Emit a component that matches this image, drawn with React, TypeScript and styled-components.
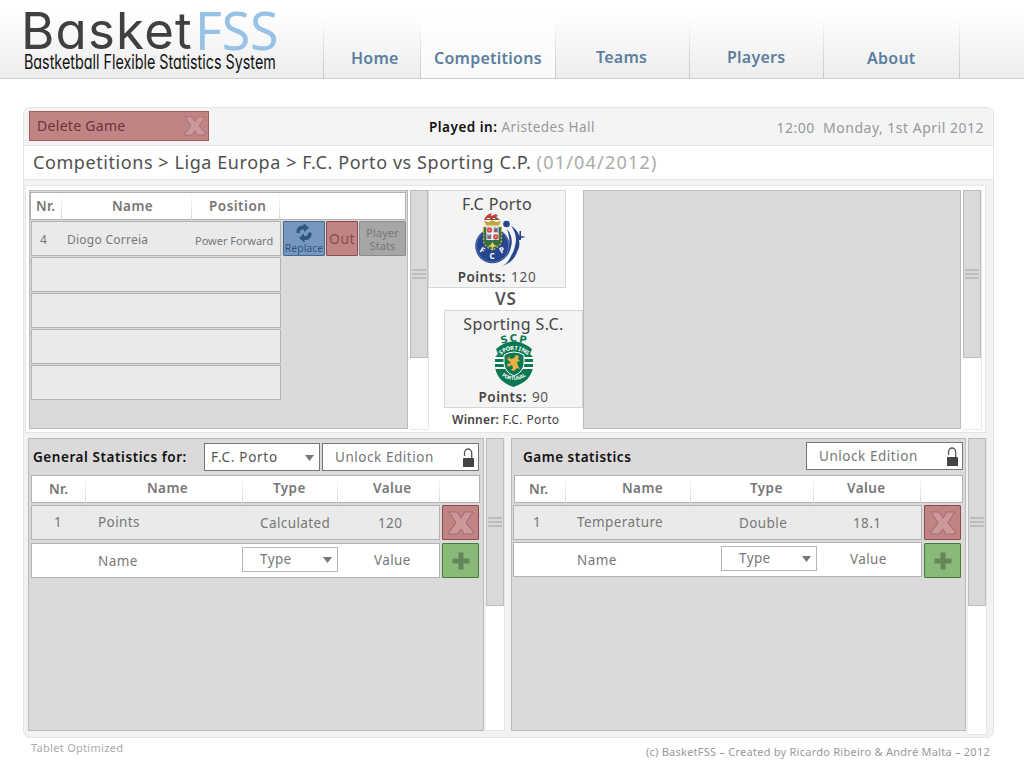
import React from "react";
import styled, { createGlobalStyle, css } from "styled-components";

const Global = createGlobalStyle`
  * { box-sizing: border-box; }
  body { margin: 0; background: #fff; }
  body, button { font-family: "Noto Sans", "Open Sans", sans-serif; }
  button { padding: 0; margin: 0; cursor: pointer; }
`;

const Page = styled.div`
  width: 1024px;
  height: 768px;
  overflow: hidden;
  display: flex;
  flex-direction: column;
`;

const Text = styled.span<{ $size?: number; $gap?: number; $color?: string; $bold?: boolean }>`
  display: inline-block;
  vertical-align: top;
  font-size: ${(p) => p.$size ?? 13.5}px;
  letter-spacing: ${(p) => p.$gap ?? 0.4}px;
  color: ${(p) => p.$color ?? "#777"};
  font-weight: ${(p) => (p.$bold ? 600 : 400)};
  line-height: 1;
  white-space: pre;
`;

/* ---------- header ---------- */

const Header = styled.header`
  height: 79px;
  flex: none;
  display: flex;
  border-bottom: 1px solid #cdcdcd;
  background: linear-gradient(#fff 12px, #ededed 78px);
`;

const Brand = styled.div`
  width: 323px;
  padding: 2px 0 0 21px;
`;

const Wordmark = styled.div`
  height: 50px;
  display: flex;
  color: #404040;
  font: 400 51px/58px Inter, sans-serif;
  font-feature-settings: "cv11";
  letter-spacing: 1.2px;
`;

const Accent = styled.span`
  margin-left: 2px;
  color: #98c1e6;
  font: 400 52px/56px "Noto Sans", sans-serif;
  letter-spacing: -0.2px;
`;

const Tagline = styled.div`
  width: 400px;
  padding-left: 4px;
  color: #111;
  font: 400 19.5px/20px Inter, sans-serif;
  font-feature-settings: "cv11";
  transform: scaleX(0.735);
  transform-origin: 0 0;
`;

const Nav = styled.nav`
  display: flex;
`;

const Tab = styled.a<{ $width: number; $active?: boolean; $left: number; $top: number }>`
  width: ${(p) => p.$width}px;
  height: 78px;
  padding: ${(p) => p.$top}px 0 0 ${(p) => p.$left}px;
  border-left: 1px solid;
  border-image: linear-gradient(transparent 25%, #c3c8cd) 1;
  ${(p) => p.$active && css`background: linear-gradient(#fff 12px, #f9f9f9 78px);`}
`;

/* ---------- main panel ---------- */

const Panel = styled.main`
  width: 971px;
  height: 631px;
  flex: none;
  margin: 28px 0 0 23px;
  border: 1px solid #e4e4e4;
  border-radius: 7px;
  background: #f2f2f2;
  overflow: hidden;
`;

const TopBar = styled.div`
  height: 38px;
  display: flex;
  border-bottom: 1px solid #e4e4e4;
  padding: 3px 0 0 5px;
  background: #f4f4f4;
`;

const DeleteButton = styled.button`
  width: 180px;
  height: 30px;
  display: flex;
  align-items: center;
  justify-content: space-between;
  padding: 0 2px 0 7px;
  border: 1px solid #a95b5c;
  background: #c08484;
`;

const Venue = styled.div`
  width: 346px;
  padding: 10px 0 0 220px;
  white-space: nowrap;
`;

const Kickoff = styled.div`
  flex: 1;
  padding: 10px 9px 0 0;
  text-align: right;
`;

const Crumbs = styled.div`
  height: 34px;
  padding: 7px 0 0 9px;
  border-bottom: 1px solid #e4e4e4;
  background: #fff;
  display: flex;
`;

const GameBox = styled.section`
  width: 961px;
  height: 248px;
  margin: 5px 0 0 1px;
  padding: 4px 3px;
  display: flex;
  border: 1px solid #e6e6e6;
  background: #fff;
`;

const Pane = styled.div<{ $width: number; $height: number; $pad?: string; $left?: number }>`
  width: ${(p) => p.$width}px;
  height: ${(p) => p.$height}px;
  flex: none;
  margin-left: ${(p) => p.$left ?? 0}px;
  padding: ${(p) => p.$pad ?? "0"};
  border: 1px solid #bababa;
  background: #dbd9da;
`;

const Track = styled.div<{ $height: number; $left: number }>`
  width: 19px;
  height: ${(p) => p.$height}px;
  flex: none;
  margin-left: ${(p) => p.$left}px;
  border: 1px solid #e6e6e6;
  border-width: 0 1px 1px 0;
  background: #fff;
`;

const Thumb = styled.div`
  width: 18px;
  height: 168px;
  padding-top: 78px;
  display: flex;
  flex-direction: column;
  align-items: center;
  gap: 2px;
  border: 1px solid #bcbcbc;
  background: #d9d9d9;
  i { width: 14px; height: 2px; background: #bcbcbc; }
`;

const Scroll = ({ height, left }: { height: number; left: number }) => (
  <Track $height={height} $left={left}>
    <Thumb><i /><i /><i /></Thumb>
  </Track>
);

/* ---------- tables ---------- */

const Heading = styled.div<{ $cols: string; $width: number; $left?: number }>`
  width: ${(p) => p.$width}px;
  height: 28px;
  margin-left: ${(p) => p.$left ?? 0}px;
  display: grid;
  grid-template-columns: ${(p) => p.$cols};
  border: 1px solid #b2b2b2;
  background: #fff;
`;

const HeadCell = styled.div<{ $left?: number; $top?: number; $last?: boolean }>`
  padding: ${(p) => p.$top ?? 6}px 0 0 ${(p) => p.$left ?? 0}px;
  border-right: ${(p) => (p.$last ? 0 : 1)}px solid;
  border-image: linear-gradient(#fff, #ccd5de) 1;
`;

const Row = styled.div<{ $cols?: string; $width: number; $blank?: boolean; $raise?: number }>`
  width: ${(p) => p.$width}px;
  height: 35px;
  flex: none;
  margin-top: -${(p) => p.$raise ?? 0}px;
  display: grid;
  grid-template-columns: ${(p) => p.$cols ?? "1fr"};
  border: 1px solid #b2b2b2;
  background: ${(p) => (p.$blank ? "#fff" : "#eaeaea")};
`;

const Rows = styled.div<{ $left: number }>`
  padding-left: ${(p) => p.$left}px;
`;

const Cell = styled.div<{ $left?: number; $top?: number }>`
  padding: ${(p) => p.$top ?? 10}px 0 0 ${(p) => p.$left ?? 0}px;
`;

const Line = styled.div<{ $gap: number; $top?: number }>`
  display: flex;
  gap: ${(p) => p.$gap}px;
  margin-top: ${(p) => p.$top ?? 0}px;
`;

const tones = {
  blue: ["#7798be", "#47678f"],
  red: ["#c08484", "#8d4a4c"],
  grey: ["#a6a6a6", "#8c8c8c"],
  green: ["#8aba78", "#3f8037"],
};

const Action = styled.button<{ $tone: keyof typeof tones; $width: number; $spread?: number }>`
  width: ${(p) => p.$width}px;
  height: 35px;
  display: flex;
  flex-direction: column;
  align-items: center;
  justify-content: center;
  gap: ${(p) => p.$spread ?? 0}px;
  border: 1px solid ${(p) => tones[p.$tone][1]};
  border-radius: 1px;
  background: ${(p) => tones[p.$tone][0]};
`;

const Select = styled.div<{ $width: number; $height: number; $left: number; $strong?: boolean }>`
  width: ${(p) => p.$width}px;
  height: ${(p) => p.$height}px;
  display: flex;
  align-items: center;
  justify-content: space-between;
  padding: 1px 4px 0 ${(p) => p.$left}px;
  border: 1px solid ${(p) => (p.$strong ? "#777" : "#b5b5b5")};
  background: #fff;
`;

const Unlock = styled.button`
  width: 157px;
  height: 28px;
  display: flex;
  align-items: center;
  justify-content: space-between;
  padding: 1px 3px 0 12px;
  border: 1px solid #777;
  background: #fff;
`;

const ToolRow = styled.div<{ $top: number; $right: number }>`
  height: 36px;
  display: flex;
  padding: ${(p) => p.$top}px ${(p) => p.$right}px 0 4px;
`;

const ToolTitle = styled.div<{ $left?: number; $top: number }>`
  flex: 1;
  padding: ${(p) => p.$top}px 0 0 ${(p) => p.$left ?? 0}px;
`;

const Stats = styled.section`
  display: flex;
  margin: 5px 0 0 4px;
`;

/* ---------- match ---------- */

const Match = styled.div`
  width: 154px;
  flex: none;
  display: flex;
  flex-direction: column;
`;

const Team = styled.div<{ $left: number; $width: number }>`
  width: ${(p) => p.$width}px;
  height: 98px;
  flex: none;
  margin-left: ${(p) => p.$left}px;
  padding-top: 5px;
  display: flex;
  flex-direction: column;
  align-items: center;
  border: 1px solid #d6d6d6;
  background: #f4f4f4;
`;

const Versus = styled.div`
  height: 22px;
  padding: 2px 0 0 66px;
`;

const Winner = styled.div`
  padding: 6px 0 0 23px;
  white-space: nowrap;
`;

const Footer = styled.footer`
  display: flex;
  justify-content: space-between;
  padding: 4px 34px 0 31px;
`;

const Created = styled.div`
  padding-top: 4px;
`;

/* ---------- drawings ---------- */

const Cross = ({ w, h }: { w: number; h: number }) => (
  <svg width={w} height={h} viewBox="0 0 26 24">
    <path d="M1 1h8l4 6 4-6h8l-2 3-5 8 7 8v3h-9l-3-5-4 5H1v-2l7-9-5-8z" fill="#cb999a" stroke="#aa6c6e" strokeWidth="1.1" strokeLinejoin="round" />
  </svg>
);

const Plus = () => (
  <svg width="18" height="18" viewBox="0 0 18 18">
    <path d="M6.5.5h5v6h6v5h-6v6h-5v-6h-6v-5h6z" fill="#64865a" />
  </svg>
);

const Arrow = () => (
  <svg width="11" height="8" viewBox="0 0 11 8"><path d="M1 1h9L5.500 7z" fill="#777" /></svg>
);

const Lock = () => (
  <svg width="13" height="20" viewBox="0 0 13 20">
    <path d="M2.500 8V5a3.600 4 0 0 1 7.200 0v5" fill="none" stroke="#555" strokeWidth="1.300" />
    <rect x="1" y="10" width="11" height="9" rx=".5" fill="#444" />
  </svg>
);

const Cycle = () => (
  <svg width="18" height="20" viewBox="0 0 18 20">
    <g fill="#31557f">
      <path d="M1.500 10C1 5 4 2 8.500 2.500V0L14 4.700 9 9V6.500C6 6 4.500 7.500 4.700 10z" />
      <path d="M16.500 9.500c.5 5-2.500 8-7 7.500V19.500L4 15l5-4.500V13c3 .500 4.500-1 4.300-3.500z" />
    </g>
  </svg>
);

const CrestBox = styled.div<{ $left?: number }>`
  height: 55px;
  padding-left: ${(p) => p.$left ?? 0}px;
  svg { display: block; }
`;

const PortoCrest = () => (
  <svg width="52" height="55" viewBox="0 0 52 55">
    <g fill="#25458f">
      <circle cx="32.500" cy="12" r="3.300" />
      <path d="M37 14c5 6 6 14 4 20-1 5-3 8-4 10-2 5-5 8-9 10 7-2 13-7 15-14 2-4 3-7 2-12h2v-2l5-1-5-1v-5h-1.500v5C44 20 41 16 37 14z" />
      <path d="M33 17c4 5 6 11 4 18-1 5-3 8-5 10 1-4 2-6 3-10 1-7 0-12-2-18z" />
      <circle cx="18.500" cy="34" r="17.300" />
    </g>
    <circle cx="18.500" cy="34" r="16.300" fill="none" stroke="#5673ad" />
    <path d="M9.500 15h18v14c0 4-5 7-9 9-4.500-2-9-5-9-9z" fill="#367044" stroke="#cfb641" strokeWidth="1.200" strokeDasharray="2 1.500" />
    <path d="M12.500 15h12v13h-12z" fill="#fff" />
    <path d="M12.500 15h5.800v6.200h-5.800zM19 21.800h5.500V28H19z" fill="#e5c9d0" />
    <g fill="none" stroke="#d54b45" strokeWidth="1.800"><circle cx="15.500" cy="18" r="1.700" /><circle cx="21.800" cy="24.800" r="1.700" /></g>
    <path d="M19.500 15.500h4.500v5h-4.500zM13 22.300h4.500v5H13z" fill="#7b93c2" />
    <path d="M20.500 17h2.500v3h-2.500zM14 24h2.500v3H14z" fill="#a85061" />
    <path d="M12 13.500 10 9l5 1 3-2 4 2 5-1-2 4.500z" fill="#c1a53e" />
    <path d="M10 8c2-5 5-6 8-7l-1 3 5-2 2 2-2 1 4 3H10z" fill="#d5393e" />
    <path d="m15 4 3 2-4 2zm6 1 4 2-5 1z" fill="#287c4b" />
    <path d="M13 6.500h3M19 6.500h2" stroke="#fff" />
    <path d="m18.500 30 2 3 3 1-4 1-1 4-1-4-4-1 3-1z" fill="#d8ce78" />
    <g fill="#fff" fontFamily="Noto Sans" fontWeight="700" fontSize="8" textAnchor="middle">
      <text x="8.500" y="41" transform="rotate(30 8.500 38)">F</text>
      <text x="18" y="47">C</text>
      <text x="28" y="41" transform="rotate(-30 28 38)">P</text>
    </g>
  </svg>
);

const arc = (word: string, cx: number, cy: number, r: number, spread: number, size: number, below = false) =>
  word.split("").map((ch, i) => {
    const a = (i - (word.length - 1) / 2) * spread * (below ? -1 : 1);
    return (
      <text key={i} x={cx} y={below ? cy + r : cy - r} fontSize={size} transform={`rotate(${a} ${cx} ${cy})`}>{ch}</text>
    );
  });

const SportingCrest = () => (
  <svg width="40" height="56" viewBox="0 0 40 56">
    <defs><clipPath id="shield"><path d="M2 17q18-15 36 0l-2 5 3 3v9q-1 15-19.500 21Q2 49 1 34v-9l3-3z" /></clipPath></defs>
    <g clipPath="url(#shield)">
      <path d="M0 8h40v48H0z" fill="#0b7851" />
      <path d="M0 26h40M0 31h40M0 36h40" stroke="#fff" strokeWidth="2" />
    </g>
    <path d="M10 23q10-6 20 0v9q-1 8-10 12-9-4-10-12z" fill="#0b7851" stroke="#fff" strokeWidth="1" />
    <path d="M22 23l3 1-1 3 2 2-3 1 1 4 2 3-3-1-3 3-3-1 2-2-1-3-4 2-1-3 4-1-3-3-2-2 3 1-1-3 3 3 3-1z" fill="#e9af40" />
    <g fontFamily="Noto Sans" fontWeight="700" textAnchor="middle" fill="#fff">
      {arc("SPORTING", 20, 38, 20, 10.500, 5.800)}
      {arc("PORTUGAL", 20, 28, 20, 9.500, 5, true)}
    </g>
    <g fontFamily="DejaVu Sans" fontWeight="700" textAnchor="middle" fill="#0b7851">
      <text x="10" y="11" fontSize="10" transform="rotate(-12 10 7)">S</text>
      <text x="19.500" y="9.500" fontSize="10">C</text>
      <text x="29" y="11" fontSize="10" transform="rotate(10 29 7)">P</text>
    </g>
  </svg>
);

/* ---------- statistics ---------- */

type StatProps = {
  cols: string;
  rowCols: string;
  headLeft: number[];
  left: number[];
  blankLeft: number[];
  name: string;
  type: string;
  value: string;
  indent: number;
  raise?: number;
};

const StatTable = ({ cols, rowCols, headLeft, left, blankLeft, name, type, value, indent, raise }: StatProps) => (
  <>
    <Heading $cols={cols} $width={449} $left={2}>
      <HeadCell $left={headLeft[0]} $top={7}><Text $bold>Nr.</Text></HeadCell>
      <HeadCell $left={headLeft[1]}><Text $bold>Name</Text></HeadCell>
      <HeadCell $left={headLeft[2]}><Text $bold>Type</Text></HeadCell>
      <HeadCell $left={headLeft[3]}><Text $bold>Value</Text></HeadCell>
      <HeadCell $last />
    </Heading>
    <Rows $left={indent}>
      <Line $gap={2} $top={2}>
        <Row $width={409} $cols={rowCols}>
          <Cell $left={left[0]}><Text>1</Text></Cell>
          <Cell $left={left[1]}><Text>{name}</Text></Cell>
          <Cell $left={left[2]} $top={11}><Text>{type}</Text></Cell>
          <Cell $left={left[3]} $top={11}><Text>{value}</Text></Cell>
        </Row>
        <Action $tone="red" $width={37}><Cross w={26} h={24} /></Action>
      </Line>
      <Line $gap={2} $top={3}>
        <Row $width={409} $cols={rowCols} $blank $raise={raise}>
          <Cell />
          <Cell $left={blankLeft[0]} $top={11}><Text>Name</Text></Cell>
          <Cell $top={3}>
            <Select $width={96} $height={25} $left={17}><Text>Type</Text><Arrow /></Select>
          </Cell>
          <Cell $left={blankLeft[1]}><Text>Value</Text></Cell>
        </Row>
        <Action $tone="green" $width={37}><Plus /></Action>
      </Line>
    </Rows>
  </>
);

const NavText = ({ children }: { children: string }) => (
  <Text $size={16} $gap={0.25} $bold $color="#5b7f9f">{children}</Text>
);

export default function App() {
  return (
    <Page>
      <Global />
      <Header>
        <Brand>
          <Wordmark>Basket<Accent>FSS</Accent></Wordmark>
          <Tagline>Bastketball Flexible Statistics System</Tagline>
        </Brand>
        <Nav>
          <Tab $width={97} $left={27} $top={50}><NavText>Home</NavText></Tab>
          <Tab $width={135} $left={13} $top={50} $active><NavText>Competitions</NavText></Tab>
          <Tab $width={134} $left={40} $top={49}><NavText>Teams</NavText></Tab>
          <Tab $width={134} $left={37} $top={49}><NavText>Players</NavText></Tab>
          <Tab $width={136} $left={43} $top={50}><NavText>About</NavText></Tab>
          <Tab $width={1} $left={0} $top={0} />
        </Nav>
      </Header>

      <Panel>
        <TopBar>
          <DeleteButton><Text $size={14} $gap={0.3} $color="#6b3538">Delete Game</Text><Cross w={22} h={20} /></DeleteButton>
          <Venue>
            <Text $size={13.5} $gap={0.5} $bold $color="#111">Played in: </Text>
            <Text $size={13.5} $gap={0.45} $color="#999">Aristedes Hall</Text>
          </Venue>
          <Kickoff><Text $size={14} $gap={0.5} $color="#999">12:00  Monday, 1st April 2012</Text></Kickoff>
        </TopBar>
        <Crumbs>
          <Text $size={18} $gap={0.57} $color="#505050">Competitions &gt; Liga Europa &gt; F.C. Porto vs Sporting C.P. </Text>
          <Text $size={18} $gap={1.2} $color="#aaa">(01/04/2012)</Text>
        </Crumbs>

        <GameBox>
          <Pane $width={379} $height={239} $pad="1px 0 0 0">
            <Heading $cols="31px 130px 88px 1fr" $width={376}>
              <HeadCell $left={5} $top={7}><Text $bold>Nr.</Text></HeadCell>
              <HeadCell $left={50} $top={7}><Text $bold>Name</Text></HeadCell>
              <HeadCell $left={17} $top={7}><Text $bold $gap={0.5}>Position</Text></HeadCell>
              <HeadCell $last />
            </Heading>
            <Rows $left={1}>
              <Line $gap={2} $top={1}>
                <Row $width={250} $cols="31px 128px 1fr">
                  <Cell $left={8} $top={12}><Text $size={12}>4</Text></Cell>
                  <Cell $left={4} $top={12}><Text $size={12} $gap={0.25}>Diogo Correia</Text></Cell>
                  <Cell $left={4} $top={13}><Text $size={11} $gap={0}>Power Forward</Text></Cell>
                </Row>
                <Line $gap={1}>
                  <Action $tone="blue" $width={42}><Cycle /><Text $size={10.5} $gap={0} $color="#31557f">Replace</Text></Action>
                  <Action $tone="red" $width={32}><Text $size={14} $color="#8d4a4c">Out</Text></Action>
                  <Action $tone="grey" $width={47} $spread={2}>
                    <Text $size={11} $gap={0.1} $color="#777">Player</Text>
                    <Text $size={11} $gap={0.1} $color="#777">Stats</Text>
                  </Action>
                </Line>
              </Line>
              {[0, 1, 2, 3].map((i) => (
                <Line key={i} $gap={0} $top={1}><Row $width={250} /></Line>
              ))}
            </Rows>
          </Pane>
          <Scroll height={240} left={2} />
          <Match>
            <Team $left={-1} $width={138}>
              <Text $size={16} $color="#444">F.C Porto</Text>
              <CrestBox $left={6}><PortoCrest /></CrestBox>
              <Line $gap={5} $top={4}>
                <Text $size={13.5} $gap={0.5} $bold $color="#444">Points:</Text>
                <Text $size={13.5} $gap={0.7} $color="#555">120</Text>
              </Line>
            </Team>
            <Versus><Text $size={17} $gap={0.8} $bold $color="#555">VS</Text></Versus>
            <Team $left={15} $width={139}>
              <Text $size={16} $color="#444">Sporting S.C.</Text>
              <CrestBox><SportingCrest /></CrestBox>
              <Line $gap={5} $top={4}>
                <Text $size={13.5} $gap={0.5} $bold $color="#444">Points:</Text>
                <Text $size={13.5} $gap={0.5} $color="#555">90</Text>
              </Line>
            </Team>
            <Winner>
              <Text $size={12} $gap={0.2} $bold $color="#444">Winner: </Text>
              <Text $size={12} $gap={0.4} $color="#444">F.C. Porto</Text>
            </Winner>
          </Match>
          <Pane $width={378} $height={239} />
          <Scroll height={240} left={2} />
        </GameBox>

        <Stats>
          <Pane $width={456} $height={293}>
            <ToolRow $top={4} $right={4}>
              <ToolTitle $top={8}><Text $bold $gap={0.56} $color="#111">General Statistics for:</Text></ToolTitle>
              <Line $gap={2}>
                <Select $strong $width={116} $height={28} $left={6}><Text $gap={0.7} $color="#555">F.C. Porto</Text><Arrow /></Select>
                <Unlock><Text $gap={0.55}>Unlock Edition</Text><Lock /></Unlock>
              </Line>
            </ToolRow>
            <StatTable
              cols="54px 157px 95px 102px 1fr" rowCols="54px 156px 96px 1fr"
              headLeft={[17, 61, 30, 35]} left={[22, 12, 18, 40]} blankLeft={[12, 36]}
              name="Points" type="Calculated" value="120" indent={2}
            />
          </Pane>
          <Scroll height={293} left={2} />
          <Pane $width={455} $height={293} $left={6}>
            <ToolRow $top={3} $right={2}>
              <ToolTitle $top={9} $left={7}><Text $bold $gap={0.5} $color="#111">Game statistics</Text></ToolTitle>
              <Unlock><Text $gap={0.55}>Unlock Edition</Text><Lock /></Unlock>
            </ToolRow>
            <StatTable
              cols="51px 125px 123px 107px 1fr" rowCols="51px 156px 96px 1fr"
              headLeft={[14, 56, 59, 33]} left={[19, 12, 18, 36]} blankLeft={[12, 33]}
              name="Temperature" type="Double" value="18.1" indent={1} raise={1}
            />
          </Pane>
          <Scroll height={297} left={2} />
        </Stats>
      </Panel>

      <Footer>
        <Text $size={11} $gap={0.3} $color="#aaa">Tablet Optimized</Text>
        <Created><Text $size={11} $gap={0.25} $color="#999">(c) BasketFSS – Created by Ricardo Ribeiro &amp; André Malta – 2012</Text></Created>
      </Footer>
    </Page>
  );
}
